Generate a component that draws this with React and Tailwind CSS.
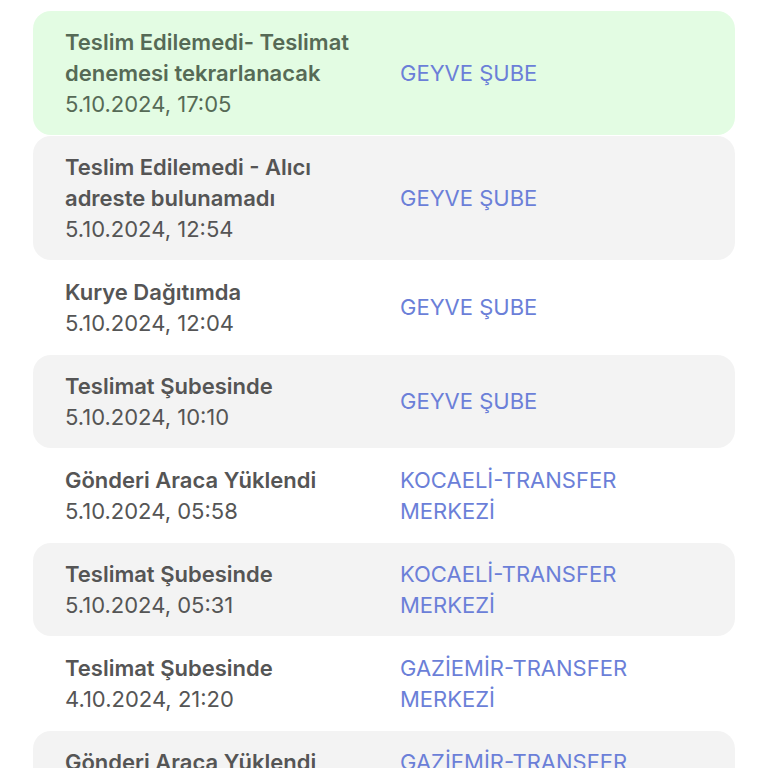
import React from "react";

const events = [
  { title: "Teslim Edilemedi- Teslimat denemesi tekrarlanacak", date: "5.10.2024, 17:05", place: "GEYVE ŞUBE", tone: "green" },
  { title: "Teslim Edilemedi - Alıcı adreste bulunamadı", date: "5.10.2024, 12:54", place: "GEYVE ŞUBE", tone: "gray" },
  { title: "Kurye Dağıtımda", date: "5.10.2024, 12:04", place: "GEYVE ŞUBE", tone: "white" },
  { title: "Teslimat Şubesinde", date: "5.10.2024, 10:10", place: "GEYVE ŞUBE", tone: "gray" },
  { title: "Gönderi Araca Yüklendi", date: "5.10.2024, 05:58", place: "KOCAELİ-TRANSFER MERKEZİ", tone: "white" },
  { title: "Teslimat Şubesinde", date: "5.10.2024, 05:31", place: "KOCAELİ-TRANSFER MERKEZİ", tone: "gray" },
  { title: "Teslimat Şubesinde", date: "4.10.2024, 21:20", place: "GAZİEMİR-TRANSFER MERKEZİ", tone: "white" },
  { title: "Gönderi Araca Yüklendi", date: "4.10.2024, 20:41", place: "GAZİEMİR-TRANSFER MERKEZİ", tone: "gray" },
];

function Row({ item }) {
  const bg =
    item.tone === "green" ? "bg-[#e3fce3]" : item.tone === "gray" ? "bg-[#f3f3f3]" : "bg-white";
  const textColor = item.tone === "green" ? "text-[#566a56]" : "text-[#555555]";
  return (
    <div className={`${bg} rounded-[18px] pl-8 pr-4 py-[15.5px] flex items-center`}>
      <div className={`w-[335px] shrink-0 ${textColor}`}>
        <div className="w-[318px] font-semibold">{item.title}</div>
        <div>{item.date}</div>
      </div>
      <div className="flex-1 text-[#6b7fd8]">
        <div className="w-[250px]">{item.place}</div>
      </div>
    </div>
  );
}

export default function App() {
  return (
    <div
      className="bg-white px-[33px] pt-[11px] text-[22px] leading-[31px] h-[768px] overflow-hidden"
      style={{ fontFamily: "Inter, 'Noto Sans', sans-serif" }}
    >
      <div className="flex flex-col gap-px">
        {events.map((e, i) => (
          <Row key={i} item={e} />
        ))}
      </div>
    </div>
  );
}
